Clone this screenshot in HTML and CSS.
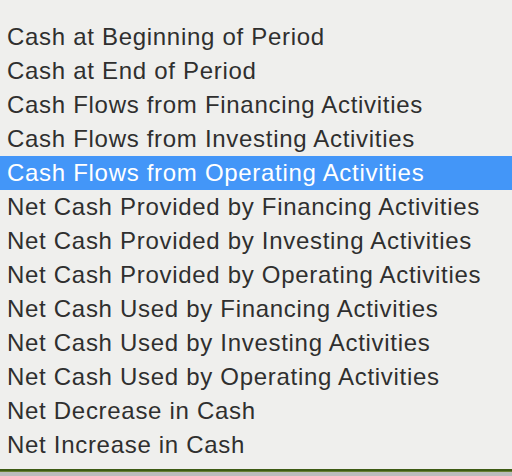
FILE: index.html
```html
<html>
	<head>
		<meta name="viewport" content="width=device-width, initial-scale=1">
		<link rel="stylesheet" href="styles.css">
	</head>
	<body>
		<div class="panel">
			<ul class="items">
				<li>Cash at Beginning of Period</li>
				<li>Cash at End of Period</li>
				<li>Cash Flows from Financing Activities</li>
				<li>Cash Flows from Investing Activities</li>
				<li class="selected">Cash Flows from Operating Activities</li>
				<li>Net Cash Provided by Financing Activities</li>
				<li>Net Cash Provided by Investing Activities</li>
				<li>Net Cash Provided by Operating Activities</li>
				<li>Net Cash Used by Financing Activities</li>
				<li>Net Cash Used by Investing Activities</li>
				<li>Net Cash Used by Operating Activities</li>
				<li>Net Decrease in Cash</li>
				<li>Net Increase in Cash</li>
			</ul>
			<div class="edge"></div>
		</div>
	</body>
</html>
```

FILE: styles.css
```css
* {
	box-sizing: border-box;
}

body
{
	margin: 0;
	background: #efefed;
	font-family: "Liberation Sans", Arial, sans-serif;
}

.panel
{
	display: flex;
	flex-direction: column;
	height: 476px;
}

.items
{
	flex: 1;
	list-style: none;
	margin: 0;
	padding: 20px 0 0 0;
}

.items li
{
	height: 34px;
	line-height: 34px;
	padding-left: 7px;
	font-size: 24px;
	letter-spacing: 0.7px;
	color: #2f2f2f;
	white-space: nowrap;
}

.items li.selected
{
	background: #4396f8;
	color: #fff;
}

.edge
{
	height: 7px;
	border-top: 2px solid #3d5a14;
	border-bottom: 4px solid #bcbcbc;
	background: #6a8036;
}
```
